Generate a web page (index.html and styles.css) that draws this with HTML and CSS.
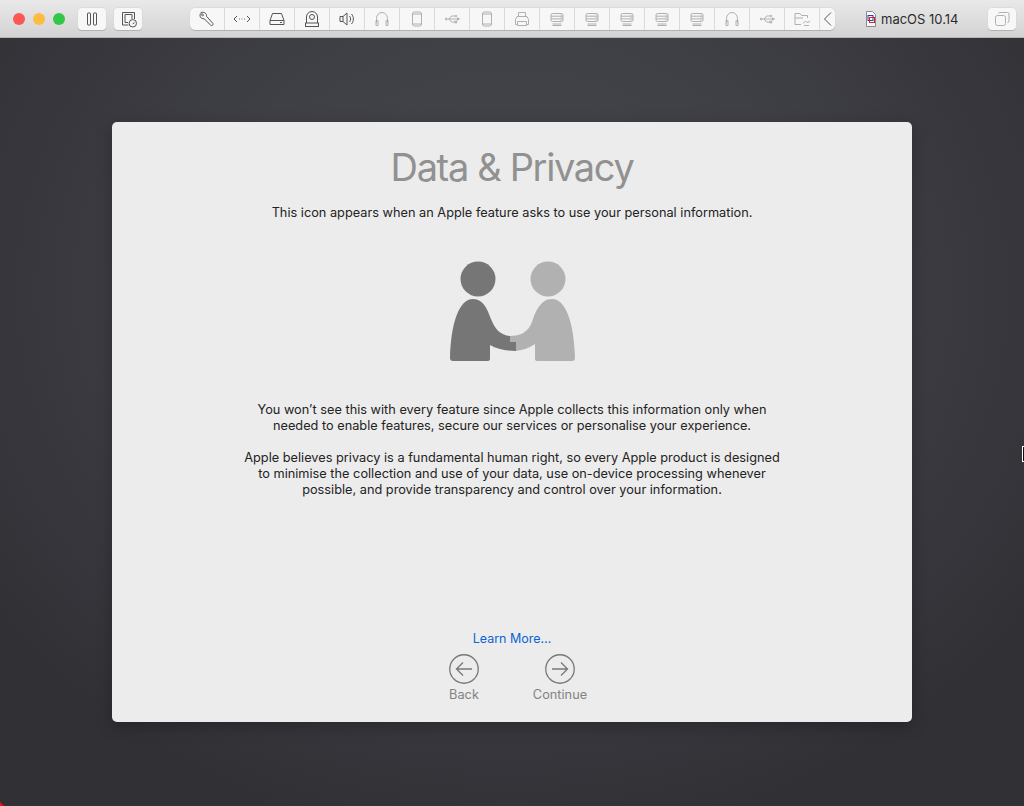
FILE: index.html
```html
<!DOCTYPE html>
<html lang="en">
<head>
<meta charset="utf-8">
<title>macOS 10.14</title>
<link rel="stylesheet" href="styles.css">
</head>
<body>
<svg class="defs" width="0" height="0">
  <defs>
    <symbol id="i-head" viewBox="0 0 20 20"><path d="M4.500 14V9.500a5.500 6 0 0 1 11 0V14M4 11.500h2v5H4zM14 11.500h2v5h-2z"/></symbol>
    <symbol id="i-phone" viewBox="0 0 20 20"><rect x="5.500" y="3" width="9" height="14" rx="2"/><path d="M5.500 5h9M5.500 15h9"/></symbol>
    <symbol id="i-usb" viewBox="0 0 20 20"><path d="M3 10h12.500M5 8.800 3 10l2 1.200M7 10l2.500-3H13M7 10l2.500 3H13"/><circle cx="14" cy="7" r=".8"/><rect x="13" y="12.200" width="1.600" height="1.600"/><path d="M15.500 8.800v2.400l2-1.200z"/></symbol>
    <symbol id="i-disk" viewBox="0 0 20 20"><rect x="4" y="4.500" width="12" height="8" rx="1.500"/><path d="M4 7.200h12M4 9.900h12M5.500 15h9M5.500 16.500h9M13.500 6h1M13.500 8.500h1M13.500 11.200h1"/></symbol>
  </defs>
</svg>
<div class="window">
  <header class="toolbar">
    <div class="lights">
      <span class="light red"></span>
      <span class="light yellow"></span>
      <span class="light green"></span>
    </div>
    <button class="tool pause" aria-label="Pause">
      <svg class="ico dark" width="14" height="14" viewBox="0 0 14 14"><rect x="2.500" y="1" width="3" height="12" rx=".5"/><rect x="8.500" y="1" width="3" height="12" rx=".5"/></svg>
    </button>
    <button class="tool snap" aria-label="Snapshot">
      <svg class="ico dark" width="20" height="20" viewBox="0 0 20 20"><path d="M10.500 16H4.500V3.500h12V10"/><path d="M7 5.500h7V10M7 5.500v8h3"/><circle cx="14.800" cy="14.300" r="3.700"/><path d="M14.800 14.800l1.800-1"/></svg>
    </button>
    <nav class="devices">
      <div class="cell"><svg class="ico dark" width="20" height="20" viewBox="0 0 20 20"><path d="M4 3.500 6.500 6 5.700 7 3.300 4.800C2.300 7.500 4 10 7 9.700l6.800 6.500c1.200 1.100 3.200-.7 2-1.900L9.500 7.300C10 4.500 7 2.500 4 3.500z"/></svg></div>
      <div class="cell"><svg class="ico dark thin" width="20" height="20" viewBox="0 0 20 20"><path d="M5 7 2 10l3 3M15 7l3 3-3 3"/><path class="dots" d="M7 10h.8M9.600 10h.8M12.200 10h.8"/></svg></div>
      <div class="cell"><svg class="ico dark" width="20" height="20" viewBox="0 0 20 20"><path d="M5.500 4.500h9l2.500 7v4h-14v-4zM3 11.500h14M13 13.500h2"/></svg></div>
      <div class="cell"><svg class="ico dark" width="20" height="20" viewBox="0 0 20 20"><path d="M4.500 14V8a5.500 5.500 0 0 1 11 0v6"/><circle cx="10" cy="8" r="2.500"/><rect x="3.500" y="14" width="13" height="3.500"/></svg></div>
      <div class="cell"><svg class="ico dark" width="20" height="20" viewBox="0 0 20 20"><path d="M3 7.500h3l4-3.500v12l-4-3.500H3zM6 7.500v5M12.500 7c1.500 1.800 1.500 4.200 0 6M14.500 5c2.500 3 2.500 7 0 10"/></svg></div>
      <div class="cell"><svg class="ico" width="20" height="20"><use href="#i-head"/></svg></div>
      <div class="cell"><svg class="ico" width="20" height="20"><use href="#i-phone"/></svg></div>
      <div class="cell"><svg class="ico" width="20" height="20"><use href="#i-usb"/></svg></div>
      <div class="cell"><svg class="ico" width="20" height="20"><use href="#i-phone"/></svg></div>
      <div class="cell"><svg class="ico" width="20" height="20" viewBox="0 0 20 20"><path d="M6.500 7V3.500h7V7M5.500 15.500H3.500v-5l1.500-3h10l1.500 3v5h-2M5.500 12.500h9v4h-9z"/></svg></div>
      <div class="cell"><svg class="ico" width="20" height="20"><use href="#i-disk"/></svg></div>
      <div class="cell"><svg class="ico" width="20" height="20"><use href="#i-disk"/></svg></div>
      <div class="cell"><svg class="ico" width="20" height="20"><use href="#i-disk"/></svg></div>
      <div class="cell"><svg class="ico" width="20" height="20"><use href="#i-disk"/></svg></div>
      <div class="cell"><svg class="ico" width="20" height="20"><use href="#i-disk"/></svg></div>
      <div class="cell"><svg class="ico" width="20" height="20"><use href="#i-head"/></svg></div>
      <div class="cell"><svg class="ico" width="20" height="20"><use href="#i-usb"/></svg></div>
      <div class="cell"><svg class="ico" width="20" height="20" viewBox="0 0 20 20"><path d="M9 15.500H3V4.500h5l1.500 2h6V9M3 9h8"/><path d="M11 14.500l2.500-2.500 1.500 1.500 3-1M12 16.500h5"/></svg></div>
      <div class="cell last"><svg class="ico dark" width="14" height="18" viewBox="0 0 14 18"><path d="M10 2.500 3.500 9l6.500 6.500"/></svg></div>
    </nav>
    <div class="vm-name">
      <svg class="vm-icon" width="12" height="16" viewBox="0 0 12 16"><path class="page" d="M1.500.5h6l3 3v12h-9z"/><rect class="blue" x="3" y="4.500" width="5" height="5"/><rect class="red-mark" x="4.500" y="6.500" width="5" height="5"/></svg>
      <span>macOS 10.14</span>
    </div>
    <button class="tool copy" aria-label="Windows">
      <svg class="ico" width="16" height="16" viewBox="0 0 16 16"><rect x="1.500" y="4.500" width="10" height="10" rx="2"/><path d="M4.500 2.500a1.500 1.500 0 0 1 1.500-1h7.500a1.500 1.500 0 0 1 1.500 1.500v7a1.500 1.500 0 0 1-1.500 1.500"/></svg>
    </button>
  </header>

  <main class="desktop">
    <section class="card">
      <h1>Data &amp; Privacy</h1>
      <p class="lead">This icon appears when an Apple feature asks to use your personal information.</p>
      <svg class="hands" width="125" height="101" viewBox="0 0 125 101">
        <circle class="p1" cx="28" cy="18" r="17.500"/>
        <circle class="p2" cx="98" cy="18" r="17.500"/>
        <path class="p2" d="M60 75C71 75 78 71 82 61 85 52 90 38 102 38 116 38 124 62 125 97 125 99 124 100 122 100H87C86 100 85 99 85 98V83C79 87 73 89 66 90V81H60Z"/>
        <path class="p1" d="M60 75C50 74 45 68 41 58 38 50 34 38 23 38 9 38 1 62 0 97 0 99 1 100 3 100H38C39 100 40 99 40 98V84C47 88 55 90 66 90V81H60Z"/>
      </svg>
      <p class="body">You won’t see this with every feature since Apple collects this information only when<br>needed to enable features, secure our services or personalise your experience.</p>
      <p class="body second">Apple believes privacy is a fundamental human right, so every Apple product is designed<br>to minimise the collection and use of your data, use on-device processing whenever<br>possible, and provide transparency and control over your information.</p>
      <div class="foot">
        <a class="more" href="#">Learn More…</a>
        <div class="nav">
          <div class="step">
            <svg class="circle" width="30" height="30" viewBox="0 0 30 30"><circle cx="15" cy="15" r="14.250"/><path d="M23 15H7.500M14 8.500 7.500 15l6.500 6.500"/></svg>
            <span>Back</span>
          </div>
          <div class="step">
            <svg class="circle" width="30" height="30" viewBox="0 0 30 30"><circle cx="15" cy="15" r="14.250"/><path d="M7 15h15.500M16 8.500l6.500 6.500-6.500 6.500"/></svg>
            <span>Continue</span>
          </div>
        </div>
      </div>
    </section>
    <span class="cursor"></span>
    <span class="corner"></span>
  </main>
</div>
</body>
</html>
```

FILE: styles.css
```css
* { box-sizing: border-box; }
html, body { margin: 0; padding: 0; height: 100%; }
body {
  font-family: Inter, "Liberation Sans", sans-serif;
  background: #2f2f34;
  overflow: hidden;
}
.defs { position: absolute; }
.window { width: 1024px; height: 806px; display: flex; flex-direction: column; }

.toolbar {
  height: 38px;
  flex: none;
  display: flex;
  align-items: center;
  padding: 0 0 0 13px;
  background: linear-gradient(#e9e9e9, #d3d3d3);
  border-bottom: 1px solid #b5b5b5;
}
.lights { display: flex; gap: 8px; width: 65px; }
.light { width: 12px; height: 12px; border-radius: 50%; }
.red { background: #fc5753; }
.yellow { background: #fdbc40; }
.green { background: #33c748; }

.tool {
  width: 28px;
  height: 22px;
  padding: 0;
  display: flex;
  align-items: center;
  justify-content: center;
  background: #f7f7f7;
  border: 0;
  border-radius: 4px;
  box-shadow: 0 1px 0 #b2b2b2, 0 0 0 .5px #d4d4d4;
}
.pause { margin-right: 8px; }
.snap { margin-right: 48px; }
.copy { margin-left: 29px; }

.ico { fill: none; stroke: #b0b0b0; stroke-width: 1; }
.ico.dark { stroke: #555; }
.ico .dots { stroke-width: 1.2; }

.devices {
  display: flex;
  width: 645px;
  height: 22px;
  background: #f7f7f7;
  border-radius: 5px;
  box-shadow: 0 1px 0 #b2b2b2, 0 0 0 .5px #d4d4d4;
}
.cell {
  width: 35px;
  display: flex;
  align-items: center;
  justify-content: center;
  border-right: 1px solid #dadada;
}
.cell.last { width: 15px; border-right: 0; }

.vm-name {
  margin-left: 30px;
  width: 94px;
  display: flex;
  align-items: center;
  gap: 4px;
  font-size: 13px;
  color: #2c2c2c;
  white-space: nowrap;
}
.vm-icon { flex: none; }
.page { fill: #f8f8f8; stroke: #8a8a8a; stroke-width: 1; }
.blue { fill: none; stroke: #2742b8; stroke-width: 1; }
.red-mark { fill: none; stroke: #d8202a; stroke-width: 1; }

.desktop {
  flex: 1;
  position: relative;
  display: flex;
  align-items: flex-start;
  justify-content: center;
  padding-top: 84px;
  background: radial-gradient(ellipse 640px 560px at 50% 33%, #46464d 0%, #3f3f46 50%, #303035 100%);
}
.card {
  width: 800px;
  height: 600px;
  background: #ececec;
  border-radius: 5px;
  display: flex;
  flex-direction: column;
  align-items: center;
  box-shadow: 0 4px 16px rgba(0, 0, 0, .25);
}
h1 {
  margin: 21px 0 0;
  font-size: 38px;
  line-height: 48px;
  font-weight: 400;
  letter-spacing: -1.35px;
  color: #919191;
}
.lead, .body {
  margin: 0;
  font-size: 12.750px;
  line-height: 16px;
  text-align: center;
  color: #232323;
  white-space: nowrap;
}
.lead { margin-top: 14px; }
.hands { display: block; margin: 40px 0 0 1px; flex: none; }
.p1 { fill: #767676; }
.p2 { fill: #b1b1b1; }
.body { margin-top: 40px; }
.body.second { margin-top: 16px; }

.foot {
  margin-top: auto;
  padding-bottom: 19px;
  display: flex;
  flex-direction: column;
  align-items: center;
}
.more {
  font-size: 12.500px;
  line-height: 16px;
  color: #0b63d8;
  text-decoration: none;
}
.nav { display: flex; gap: 36px; margin-top: 7px; }
.step {
  width: 60px;
  display: flex;
  flex-direction: column;
  align-items: center;
  gap: 3px;
  font-size: 12.750px;
  line-height: 16px;
  color: #838383;
}
.circle { fill: none; stroke: #787878; stroke-width: 1.300; display: block; }

.cursor {
  position: absolute;
  right: 0;
  top: 408px;
  width: 2px;
  height: 16px;
  background: #111;
  border: 1px solid #fff;
  border-right: 0;
}
.corner {
  position: absolute;
  left: 0;
  bottom: 0;
  width: 0;
  height: 0;
  border-left: 4px solid #f01010;
  border-top: 4px solid transparent;
}
```
